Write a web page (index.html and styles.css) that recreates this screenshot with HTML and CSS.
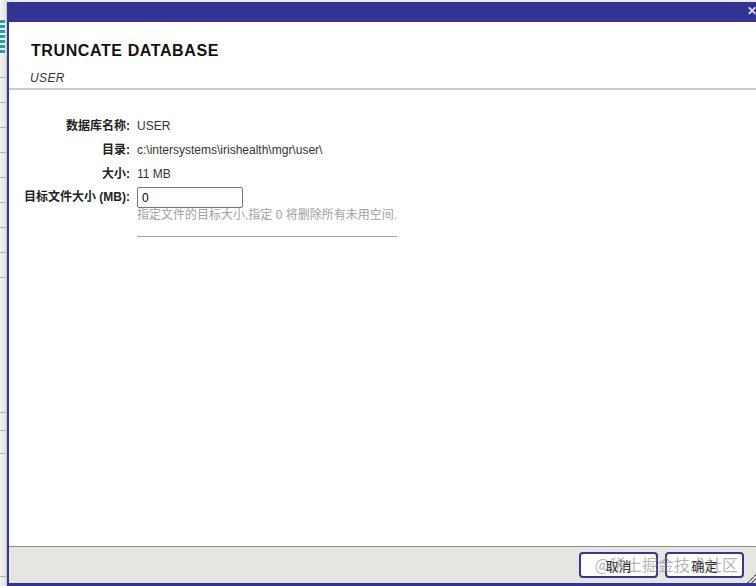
FILE: index.html
```html
<html>
  <head>
    <title>Truncate Database</title>
    <link rel="stylesheet" href="styles.css">
  </head>
  <body>
    <div class="page">
      <div class="side">
        <div class="sideTop"><span class="sideIcon"></span></div>
        <div class="sideRow"></div>
        <div class="sideRow"></div>
        <div class="sideRow"></div>
        <div class="sideRow"></div>
        <div class="sideRow"></div>
        <div class="sideRow"></div>
        <div class="sideRow"></div>
        <div class="sideRow"></div>
        <div class="sideRow tall"></div>
        <div class="sideRow short"></div>
        <div class="sideRow mid"></div>
        <div class="sideRow big"></div>
      </div>

      <div class="dialog">
        <div class="titleBar">
          <span class="close">&#x2715;</span>
        </div>

        <div class="header">
          <h1 class="title">TRUNCATE DATABASE</h1>
          <div class="subtitle">USER</div>
        </div>

        <div class="body">
          <div class="row">
            <div class="label">数据库名称:</div>
            <div class="value">USER</div>
          </div>
          <div class="row">
            <div class="label">目录:</div>
            <div class="value">c:\intersystems\irishealth\mgr\user\</div>
          </div>
          <div class="row last">
            <div class="label">大小:</div>
            <div class="value">11 MB</div>
          </div>
          <div class="row inputRow">
            <div class="label inputLabel">目标文件大小 (MB):</div>
            <div class="field">
              <input class="textInput" type="text" value="0">
              <div class="hint">指定文件的目标大小,指定 0 将删除所有未用空间.</div>
              <div class="hintLine"></div>
            </div>
          </div>
        </div>

        <div class="footer">
          <button class="btn">取消</button>
          <button class="btn">确定</button>
          <span class="grip"></span>
          <span class="watermark">@稀土掘金技术社区</span>
        </div>
      </div>
    </div>
  </body>
</html>
```

FILE: styles.css
```css
body {
  margin: 0;
  width: 756px;
  height: 586px;
  overflow: hidden;
  font-family: "Liberation Sans", Arial, "Noto Sans CJK SC", sans-serif;
  background-color: #ececec;
}

.page {
  display: flex;
  height: 586px;
}

/* page behind the dialog */
.side {
  width: 7px;
  flex: none;
  background: linear-gradient(to right, #f4f4f4, #e2e2e2);
  border-right: 1px solid #c8c8d8;
  box-sizing: border-box;
}
.sideTop {
  height: 77px;
  position: relative;
  overflow: hidden;
}
.sideIcon {
  position: absolute;
  left: -4px;
  top: 20px;
  width: 9px;
  height: 34px;
  background: repeating-linear-gradient(to bottom, #2a9d9d 0 3px, #e8f4f4 3px 5px);
}
.sideRow {
  height: 25px;
  border-top: 1px solid #b4b4b4;
  box-sizing: border-box;
}
.sideRow.tall { height: 135px; }
.sideRow.short { height: 18px; }
.sideRow.mid { height: 23px; }
.sideRow.big { height: 124px; border-bottom: 1px solid #b4b4b4; }

.dialog {
  flex: 1;
  margin-top: 2px;
  border-left: 2px solid #37378a;
  background-color: #fff;
  display: flex;
  flex-direction: column;
}

.titleBar {
  height: 20px;
  background-color: #333394;
  position: relative;
}
.close {
  position: absolute;
  right: -1px;
  top: 2px;
  color: #dcdcf0;
  font-size: 12px;
  font-weight: bold;
}

.header {
  padding: 20px 0 0 22px;
  height: 46px;
  border-bottom: 2px solid #cacaca;
}
.title {
  margin: 0;
  font-size: 16px;
  font-weight: bold;
  letter-spacing: 0.6px;
  color: #111;
}
.subtitle {
  margin-top: 11px;
  margin-left: -1px;
  font-size: 12px;
  font-style: italic;
  color: #333;
  letter-spacing: 0.4px;
}

.body {
  flex: 1;
  padding-top: 27px;
}

.row {
  display: flex;
  align-items: center;
  gap: 7px;
  margin-bottom: 6px;
}
.row.last {
  margin-bottom: 4px;
}
.inputRow {
  align-items: flex-start;
}
.label {
  width: 121px;
  flex: none;
  text-align: right;
  font-size: 12px;
  font-weight: bold;
  color: #222;
  line-height: 18px;
}
.inputLabel {
  padding-top: 1px;
}
.value {
  font-size: 12px;
  color: #333;
  line-height: 18px;
}
.textInput {
  width: 106px;
  height: 21px;
  box-sizing: border-box;
  border: 1px solid #767676;
  border-radius: 2px;
  padding: 1px 4px;
  font-family: "Liberation Sans", Arial, sans-serif;
  font-size: 12px;
  color: #000;
  display: block;
}
.hint {
  font-size: 12px;
  color: #a0a0a0;
  line-height: 14px;
}
.hintLine {
  width: 260px;
  margin-top: 14px;
  border-top: 1px solid #a4a4a4;
}

.footer {
  height: 36px;
  border-top: 1px solid #8a8a8a;
  border-bottom: 3px solid #333394;
  background-color: #e6e5e1;
  display: flex;
  justify-content: flex-end;
  align-items: center;
  gap: 7px;
  padding-right: 12px;
  position: relative;
}
.btn {
  width: 79px;
  height: 26px;
  border: 2px solid #37378a;
  border-radius: 4px;
  background-color: #fff;
  font-family: "Liberation Sans", "Noto Sans CJK SC", sans-serif;
  font-size: 13px;
  color: #222;
  padding: 0;
}
.grip {
  position: absolute;
  right: 0;
  bottom: 0;
  width: 9px;
  height: 9px;
  background: linear-gradient(135deg, transparent 50%, #777 50%, #777 58%, transparent 58%, transparent 72%, #777 72%, #777 80%, transparent 80%);
}
.watermark {
  position: absolute;
  right: 18px;
  top: 5px;
  font-family: "Noto Sans CJK SC", sans-serif;
  font-size: 16px;
  color: rgba(130, 130, 130, 0.6);
  pointer-events: none;
}
```
